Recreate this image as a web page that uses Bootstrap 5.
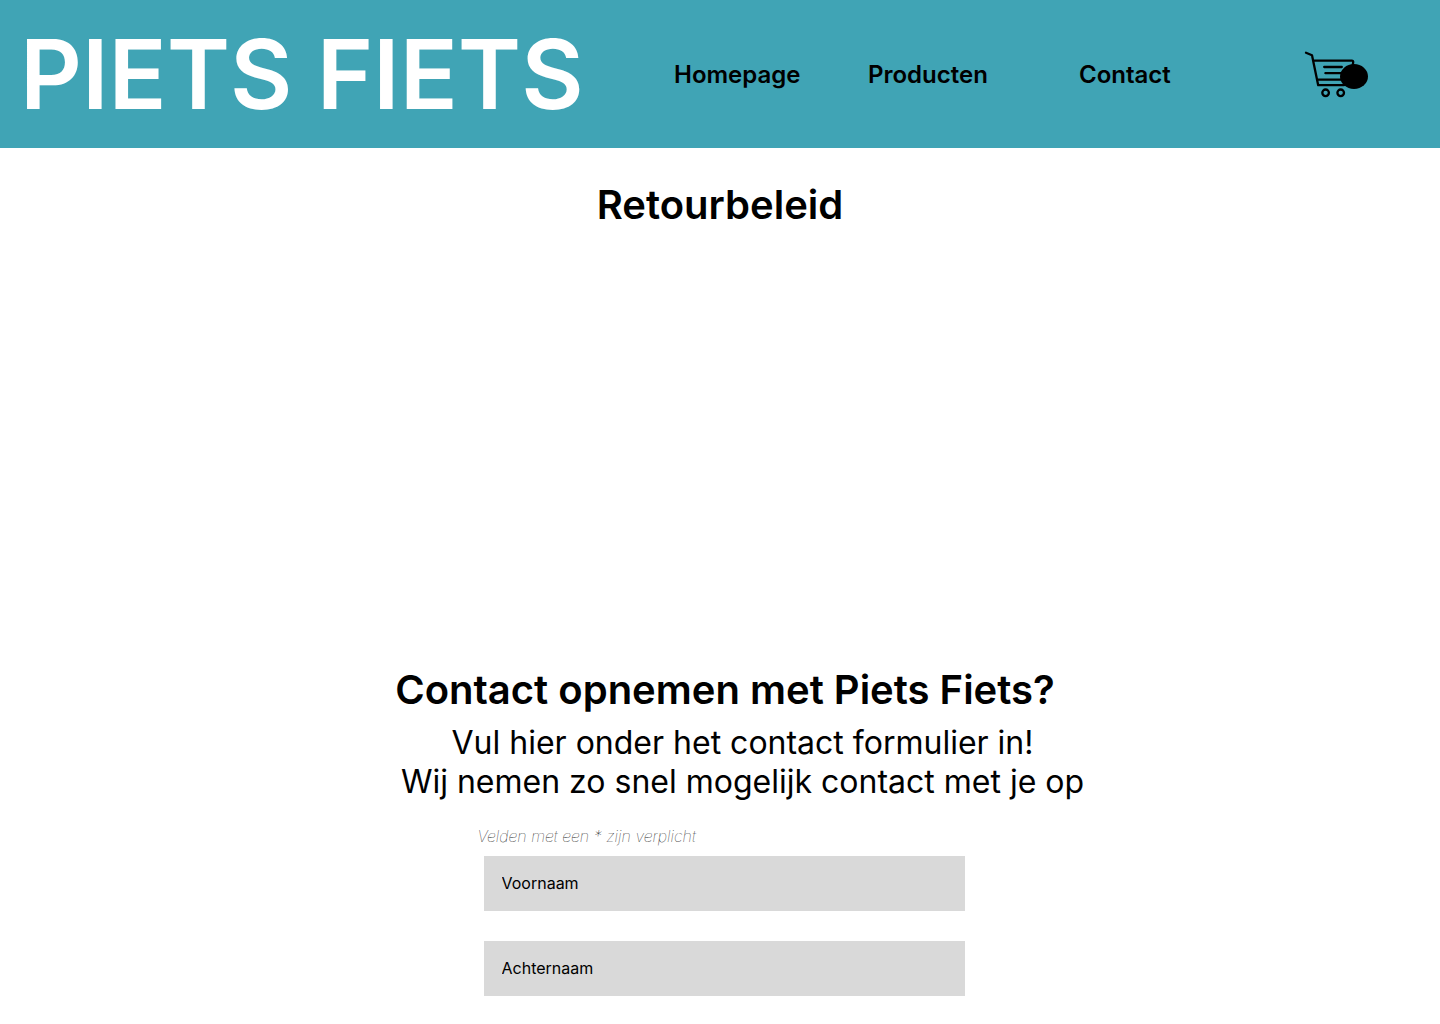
<!DOCTYPE html>
<html lang="nl">
<head>
<meta charset="utf-8">
<meta name="viewport" content="width=device-width, initial-scale=1">
<title>Piets Fiets</title>
<link href="https://cdn.jsdelivr.net/npm/bootstrap@5.3.0/dist/css/bootstrap.min.css" rel="stylesheet">
<style>
body{font-family:Inter,"Liberation Sans",sans-serif;color:#000;background:#fff}
.topbar{background:#40a4b5;min-height:148px;padding:0 72px 0 20px}
.topbar a{color:#000}
.topbar .brand{font-size:96px;line-height:116px;font-weight:600;color:#fff;flex:0 0 654px}
.menu-link{font-size:24px;line-height:29px;font-weight:600}
.menu-home{flex:0 0 194px}
.menu-products{flex:0 0 211px}
.title{font-size:40px;line-height:48px;font-weight:600}
.policy{min-height:484px;padding-top:33px}
.contact{padding:34px 0 9px 10px}
.intro-wrap{padding:0 0 26px 45px}
.intro{font-size:32px;line-height:39px;font-weight:400}
.form-area{width:489px;max-width:100%}
.note{font-size:16px;line-height:19px;font-weight:100;font-style:italic;padding-left:2px}
.fields{gap:30px;padding:10px 0 28px 8px}
.field{height:55px;font-size:16px;padding:0 18px 2px}
.field,.field:focus{background:#d9d9d9;color:#000}
.field::placeholder{color:#000;opacity:1}
</style>
</head>
<body>
<header class="topbar d-flex align-items-center">
  <a href="#" class="brand text-decoration-none text-nowrap">PIETS FIETS</a>
  <nav class="d-flex" aria-label="Hoofdmenu">
    <a href="#" class="menu-link menu-home text-decoration-none">Homepage</a>
    <a href="#" class="menu-link menu-products text-decoration-none">Producten</a>
    <a href="#contact" class="menu-link text-decoration-none">Contact</a>
  </nav>
  <a href="#" class="ms-auto d-flex" aria-label="Winkelwagen">
    <svg width="64" height="48" viewBox="0 0 64 48" fill="none" stroke="#000" stroke-width="2.3" stroke-linecap="round" stroke-linejoin="round"><path d="M2 2.8l6 2.4 6.2 30H40M9.6 10.7h38.2q1.6 0 1.4 1.5l-.6 4M20.2 17h17.6M21.4 23.2H40M13 29.6h27"/><circle cx="21.6" cy="42.8" r="3.3"/><circle cx="36.7" cy="42.8" r="3.3"/><ellipse cx="50" cy="26.5" rx="14" ry="12.5" fill="#000" stroke="none"/></svg>
  </a>
</header>
<main>
  <section class="policy text-center"><h1 class="title m-0">Retourbeleid</h1></section>
  <section id="contact">
    <div class="contact text-center"><h2 class="title m-0">Contact opnemen met Piets Fiets?</h2></div>
    <div class="intro-wrap text-center"><p class="intro m-0">Vul hier onder het contact formulier in!<br>Wij nemen zo snel mogelijk contact met je op</p></div>
    <form class="form-area mx-auto">
      <p class="note m-0">Velden met een * zijn verplicht</p>
      <div class="fields d-flex flex-column">
        <input class="field form-control rounded-0 border-0" placeholder="Voornaam" aria-label="Voornaam">
        <input class="field form-control rounded-0 border-0" placeholder="Achternaam" aria-label="Achternaam">
      </div>
    </form>
  </section>
</main>
<script src="https://cdn.jsdelivr.net/npm/bootstrap@5.3.0/dist/js/bootstrap.bundle.min.js"></script>
</body>
</html>
